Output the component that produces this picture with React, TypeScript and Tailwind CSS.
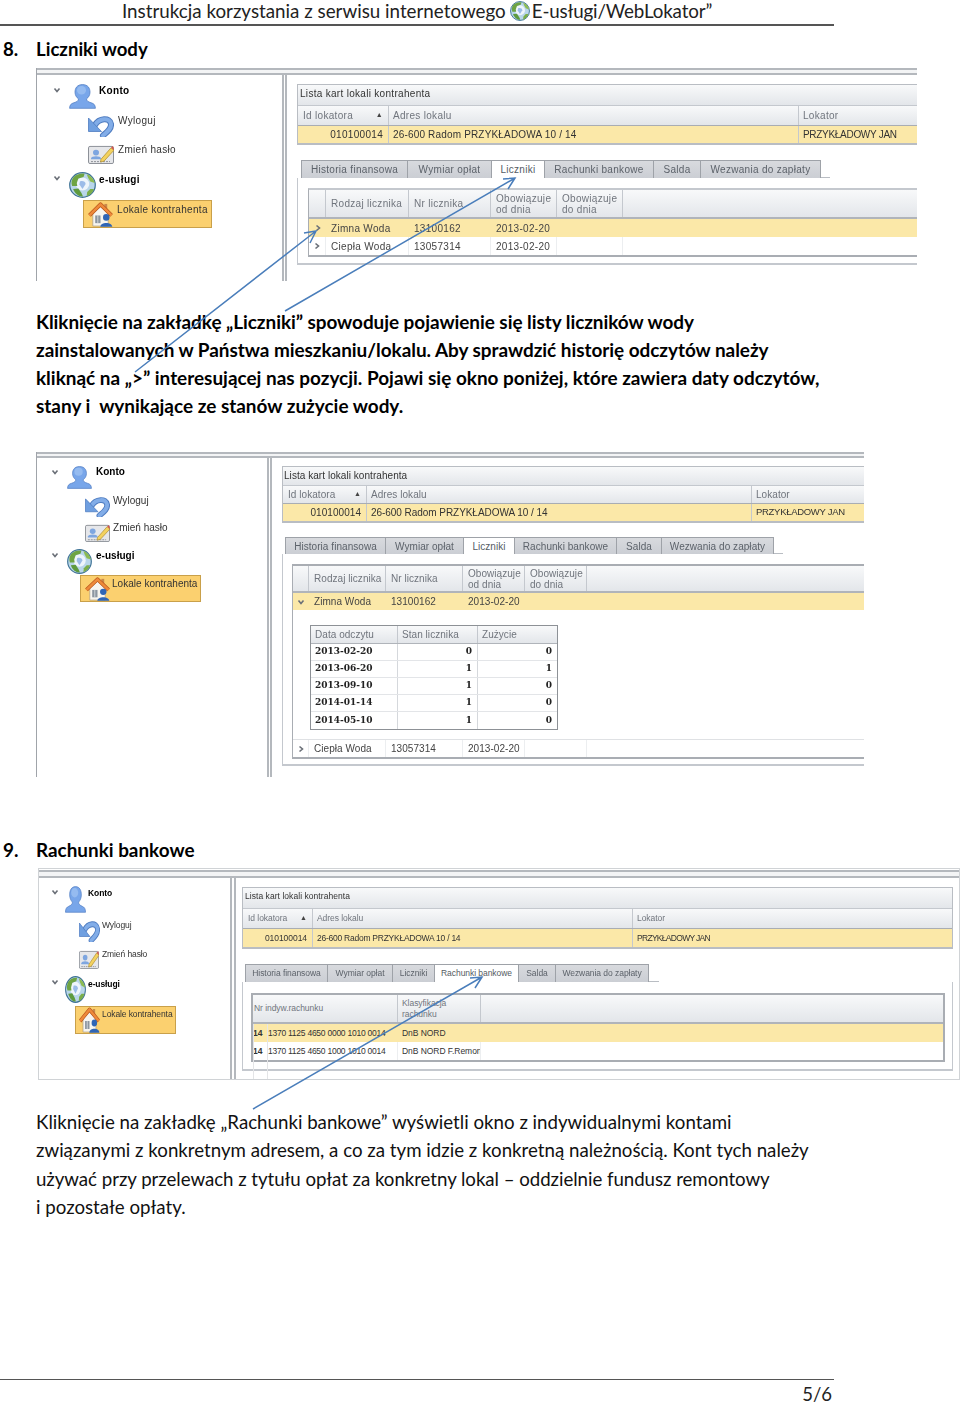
import React from 'react';

const Chevron = ({ open }: { open?: boolean }) => (
  <svg viewBox="0 0 8 8" className="w-2 h-2 shrink-0" fill="none" stroke="#6b7078" strokeWidth="1.6">
    <path d={open ? 'M1.5 2.5 L4 5.5 L6.5 2.5' : 'M2.5 1.5 L5.5 4 L2.5 6.5'} />
  </svg>
);

const PersonIcon = ({ className }: { className: string }) => (
  <svg viewBox="0 0 27 26" preserveAspectRatio="none" className={`shrink-0 ${className}`}>
    <path d="M13.5 0.600 C8 0.600 6 4.500 6 8.500 C6 11.500 7.500 14 9.500 15.500 C9.500 17.500 8 18.500 5 19.500 C2 20.500 0.800 21.500 0.600 25.300 L26.400 25.300 C26.200 21.500 25 20.500 22 19.500 C19 18.500 17.500 17.500 17.500 15.500 C19.500 14 21 11.500 21 8.500 C21 4.500 19 0.600 13.5 0.600 Z" fill="#78a6ea" stroke="#5580c4" strokeWidth="0.8" />
    <ellipse cx="12.500" cy="6.500" rx="4.500" ry="4.500" fill="#a9c9f4" opacity="0.6" />
  </svg>
);

const UndoIcon = ({ className }: { className: string }) => (
  <svg viewBox="0 0 26 22" preserveAspectRatio="none" className={`shrink-0 ${className}`}>
    <path d="M7 10 C11 3 22 2 23 9 C23.500 14 19 17 15 20.500" fill="none" stroke="#4f7cc0" strokeWidth="6" strokeLinecap="round" />
    <path d="M7 10 C11 3 22 2 23 9 C23.500 14 19 17 15 20.500" fill="none" stroke="#82ade8" strokeWidth="4" strokeLinecap="round" />
    <path d="M0.500 3 L0.500 16.500 L13.500 16.500 Z" fill="#6f9fe0" stroke="#4f7cc0" strokeWidth="0.8" />
  </svg>
);

const CardIcon = ({ className }: { className: string }) => (
  <svg viewBox="0 0 26 20" preserveAspectRatio="none" className={`shrink-0 ${className}`}>
    <rect x="0.500" y="1.500" width="25" height="18" rx="1.500" fill="#e6e7ea" stroke="#8b8f96" />
    <circle cx="8" cy="8" r="3" fill="#7ea6e0" />
    <path d="M3 14 C3 11 13 11 13 14 L13 15 L3 15 Z" fill="#7ea6e0" />
    <path d="M3 17.500 H22" stroke="#8b8f96" strokeWidth="1" strokeDasharray="2 1" />
    <path d="M13 15 L23 3 L26 5.500 L16 17 L12.500 18 Z" fill="#f3d25f" stroke="#a9872b" strokeWidth="0.7" />
    <path d="M23 3 L26 5.500 L25 1 Z" fill="#d9534a" />
  </svg>
);

const GlobeIcon = ({ className }: { className: string }) => (
  <svg viewBox="0 0 26 26" preserveAspectRatio="none" className={`shrink-0 ${className}`}>
    <circle cx="13" cy="13" r="12.300" fill="#b9d6ea" stroke="#3f7396" strokeWidth="1.200" />
    <circle cx="13" cy="12" r="6.500" fill="#eef5fb" />
    <path d="M4.500 5 C7 2.500 11 1.200 15 1.700 L14 5 L9 6.500 L7.500 11 L8 14 L3 14 C1.800 10.500 2.500 7.500 4.500 5 Z" fill="#6ea443" />
    <path d="M17 2.200 C21 3.500 24 7 24.800 11 L20.500 9.500 L18.500 6 Z" fill="#8dbb52" />
    <path d="M4 17 L9 16.500 L12 21 L13.500 24.500 C9 24.800 5.500 21.500 4 17 Z" fill="#5e9a3e" />
    <path d="M24 17 C23 20.500 20.500 23 17 24.300 L17.500 20 L20.500 17 Z" fill="#7aae49" />
    <path d="M10.500 9.500 C13 8.500 16 9.500 16 12 L13 17 L10 12.500 Z" fill="#9cbce8" />
  </svg>
);

const HouseIcon = ({ className }: { className: string }) => (
  <svg viewBox="0 0 26 26" preserveAspectRatio="none" className={`shrink-0 ${className}`}>
    <rect x="17" y="2" width="3" height="6" fill="#c98a4a" />
    <path d="M5 12 L13 5 L21 12 L21 25 L5 25 Z" fill="#f7f5ef" stroke="#a99a85" strokeWidth="0.7" />
    <path d="M1.500 14 L13 2.500 L24.500 14" fill="none" stroke="#b9561d" strokeWidth="4" strokeLinejoin="round" />
    <path d="M1.500 14 L13 2.500 L24.500 14" fill="none" stroke="#ee8a3a" strokeWidth="2.600" strokeLinejoin="round" />
    <rect x="7.500" y="14" width="5.500" height="8" fill="#8c96a0" />
    <path d="M10.200 14 V22" stroke="#e6e8ea" strokeWidth="0.800" />
    <circle cx="19" cy="16" r="3.400" fill="#2f65b5" />
    <path d="M12.800 25.800 C12.800 20.500 25.200 20.500 25.200 25.800 Z" fill="#2f65b5" />
  </svg>
);

type TreeStyle = {
  root: string;
  konto: string; kontoIcon: string; kontoLabel: string;
  wyloguj: string; wylogujIcon: string; wylogujLabel: string;
  haslo: string; hasloIcon: string; hasloLabel: string;
  uslugi: string; uslugiIcon: string; uslugiLabel: string;
  lokale: string; lokaleIcon: string; lokaleLabel: string;
  chev: string;
};

const Tree = ({ s }: { s: TreeStyle }) => (
  <div className={`flex flex-col shrink-0 text-[#333] ${s.root}`}>
    <div className={`flex items-start ${s.konto}`}>
      <span className={`flex pt-[2px] ${s.chev}`}><Chevron open /></span>
      <PersonIcon className={s.kontoIcon} />
      <span className={`font-bold text-black ${s.kontoLabel}`}>Konto</span>
    </div>
    <div className={`flex items-start ${s.wyloguj}`}>
      <UndoIcon className={s.wylogujIcon} />
      <span className={s.wylogujLabel}>Wyloguj</span>
    </div>
    <div className={`flex items-start ${s.haslo}`}>
      <CardIcon className={s.hasloIcon} />
      <span className={s.hasloLabel}>Zmień hasło</span>
    </div>
    <div className={`flex items-start ${s.uslugi}`}>
      <span className={`flex pt-[2px] ${s.chev}`}><Chevron open /></span>
      <GlobeIcon className={s.uslugiIcon} />
      <span className={`font-bold text-black ${s.uslugiLabel}`}>e-usługi</span>
    </div>
    <div className={`flex items-start bg-[#fbd06f] border border-[#c9a04a] ${s.lokale}`}>
      <HouseIcon className={s.lokaleIcon} />
      <span className={s.lokaleLabel}>Lokale kontrahenta</span>
    </div>
  </div>
);

const headBg = 'bg-gradient-to-b from-[#f8f9fa] to-[#e3e6ea]';
const cellLine = 'border-r border-[#c4c8ce]';

type ListStyle = { wrap: string; title: string; head: string; row: string; cols: string; addr: string; name: string };

const ListPanel = ({ s }: { s: ListStyle }) => (
  <div className={`border border-[#b9bdc3] border-b-2 shrink-0 ${s.wrap}`}>
    <div className={`flex items-center text-[#333] ${headBg} border-b border-[#c4c8ce] ${s.title}`}>Lista kart lokali kontrahenta</div>
    <div className={`grid text-[#70757d] ${headBg} border-b border-[#a9adb3] ${s.cols} ${s.head}`}>
      <div className={`flex items-center justify-between px-[5px] ${cellLine}`}>Id lokatora <span className="text-[7px] text-[#444]">▲</span></div>
      <div className={`flex items-center px-[4px] ${cellLine}`}>Adres lokalu</div>
      <div className="flex items-center px-[4px]">Lokator</div>
    </div>
    <div className={`grid text-[#333] bg-[#fbe8a8] ${s.cols} ${s.row}`}>
      <div className={`flex items-center justify-end px-[5px] ${cellLine}`}>010100014</div>
      <div className={`flex items-center px-[4px] whitespace-nowrap ${cellLine} ${s.addr}`}>26-600 Radom PRZYKŁADOWA 10 / 14</div>
      <div className={`flex items-center px-[4px] whitespace-nowrap ${s.name}`}>PRZYKŁADOWY JAN</div>
    </div>
  </div>
);

const TABS = ['Historia finansowa', 'Wymiar opłat', 'Liczniki', 'Rachunki bankowe', 'Salda', 'Wezwania do zapłaty'];

const Tabs = ({ widths, active, cls, strip }: { widths: string[]; active: number; cls: string; strip: string }) => (
  <div className={`flex shrink-0 ${strip}`}>
    {TABS.map((t, i) => (
      <div
        key={t}
        className={`flex items-center justify-center whitespace-nowrap border-r border-t border-[#9ea2a8] first:border-l ${widths[i]} ${cls} ${i === active ? 'bg-white text-[#555b63] border-b-0 relative z-10 -mb-px' : 'bg-gradient-to-b from-[#d8dade] to-[#cbced4] text-[#5c626a]'}`}
      >
        {t}
      </div>
    ))}
  </div>
);

const MeterHead = ({ cols, cls }: { cols: string; cls: string }) => (
  <div className={`grid text-[#70757d] ${headBg} border-b-2 border-[#b0b4ba] ${cols} ${cls}`}>
    <div className={cellLine} />
    <div className={`flex items-center pl-[5px] ${cellLine}`}>Rodzaj licznika</div>
    <div className={`flex items-center pl-[5px] ${cellLine}`}>Nr licznika</div>
    <div className={`flex items-center pl-[5px] leading-[11px] ${cellLine}`}>Obowiązuje<br />od dnia</div>
    <div className={`flex items-center pl-[5px] leading-[11px] ${cellLine}`}>Obowiązuje<br />do dnia</div>
    <div />
  </div>
);

const MeterRow = ({ cols, cls, name, no, open, hl }: { cols: string; cls: string; name: string; no: string; open?: boolean; hl?: boolean }) => (
  <div className={`grid text-[#444] ${hl ? 'bg-[#fbe8a8]' : 'bg-white'} ${cols} ${cls}`}>
    <div className={`flex items-center justify-center ${hl ? '' : 'border-r border-[#eceef0]'}`}><Chevron open={open} /></div>
    <div className={`flex items-center pl-[5px] ${hl ? '' : 'border-r border-[#eceef0]'}`}>{name}</div>
    <div className={`flex items-center pl-[5px] ${hl ? '' : 'border-r border-[#eceef0]'}`}>{no}</div>
    <div className={`flex items-center pl-[5px] ${hl ? '' : 'border-r border-[#eceef0]'}`}>2013-02-20</div>
    <div className={hl ? '' : 'border-r border-[#eceef0]'} />
    <div />
  </div>
);

const READINGS = [
  ['2013-02-20', '0', '0'],
  ['2013-06-20', '1', '1'],
  ['2013-09-10', '1', '0'],
  ['2014-01-14', '1', '0'],
  ['2014-05-10', '1', '0'],
];

const tree1: TreeStyle = {
  root: 'w-[245px] pt-[9px] text-[10px] leading-[12px] tracking-[0.32px]',
  chev: 'w-[16px]',
  konto: 'h-[31px] pl-[16px]', kontoIcon: 'w-[27px] h-[25px]', kontoLabel: 'ml-[3px] mt-[1px]',
  wyloguj: 'h-[30px] pl-[51px]', wylogujIcon: 'w-[26px] h-[22px]', wylogujLabel: 'ml-[4px]',
  haslo: 'h-[27px] pl-[51px]', hasloIcon: 'w-[26px] h-[19px]', hasloLabel: 'ml-[4px] -mt-[1px]',
  uslugi: 'h-[28px] pl-[16px]', uslugiIcon: 'w-[27px] h-[26px]', uslugiLabel: 'ml-[3px] mt-[2px]',
  lokale: 'h-[28px] w-[129px] ml-[46px]', lokaleIcon: 'w-[25px] h-[25px] ml-[4px] mt-[1px]', lokaleLabel: 'ml-[4px] mt-[3px] whitespace-nowrap',
};

const tree2: TreeStyle = {
  root: 'w-[230px] pt-[8px] text-[10px] leading-[12px] tracking-[0.02px]',
  chev: 'w-[16px]',
  konto: 'h-[30px] pl-[14px]', kontoIcon: 'w-[25px] h-[23px]', kontoLabel: 'ml-[4px]',
  wyloguj: 'h-[28px] pl-[48px]', wylogujIcon: 'w-[25px] h-[21px]', wylogujLabel: 'ml-[3px] -mt-[1px]',
  haslo: 'h-[25px] pl-[48px]', hasloIcon: 'w-[25px] h-[18px]', hasloLabel: 'ml-[3px] -mt-[2px]',
  uslugi: 'h-[26px] pl-[14px]', uslugiIcon: 'w-[25px] h-[25px]', uslugiLabel: 'ml-[4px] mt-[1px]',
  lokale: 'h-[27px] w-[121px] ml-[43px]', lokaleIcon: 'w-[25px] h-[24px] ml-[4px] mt-[1px]', lokaleLabel: 'ml-[2px] mt-[2px] whitespace-nowrap',
};

const tree3: TreeStyle = {
  root: 'w-[191px] pt-[8px] text-[8.500px] leading-[12px] tracking-[-0.1px]',
  chev: 'w-[14px]',
  konto: 'h-[34px] pl-[12px]', kontoIcon: 'w-[21px] h-[27px]', kontoLabel: 'ml-[2px] mt-[1px]',
  wyloguj: 'h-[30px] pl-[40px]', wylogujIcon: 'w-[21px] h-[22px]', wylogujLabel: 'ml-[2px] -mt-[1px]',
  haslo: 'h-[26px] pl-[40px]', hasloIcon: 'w-[20px] h-[19px]', hasloLabel: 'ml-[3px] -mt-[2px]',
  uslugi: 'h-[30px] pl-[12px]', uslugiIcon: 'w-[21px] h-[27px]', uslugiLabel: 'ml-[2px] mt-[2px]',
  lokale: 'h-[28px] w-[101px] ml-[36px]', lokaleIcon: 'w-[21px] h-[26px] ml-[3px]', lokaleLabel: 'ml-[2px] mt-[1px] whitespace-nowrap',
};

const Arrows = () => (
  <svg className="absolute inset-0 w-[960px] h-[1406px] pointer-events-none" viewBox="0 0 960 1406" fill="none" stroke="#4a7ebb" strokeWidth="1.500">
    <path d="M135 372 L316 231 M304 233 L316 231 L310 243" />
    <path d="M285 311 L515 178 M503 179 L515 178 L508 189" />
    <path d="M253 1109 L482 977 M470 978 L482 977 L475 988" />
  </svg>
);

const sans = "font-['Lato','Liberation_Sans',sans-serif]";
const ui = "font-['Liberation_Sans',Arial,sans-serif]";
const cols1 = 'grid-cols-[17px_83px_82px_66px_66px_1fr]';
const cols2 = 'grid-cols-[16px_77px_77px_62px_62px_1fr]';

export default function App() {
  return (
    <div className={`relative w-[960px] h-[1406px] flex flex-col overflow-hidden bg-white text-black ${sans}`}>
      {/* running header */}
      <div className="h-[26px] w-[834px] shrink-0 border-b-2 border-[#555] flex items-center pl-[122px] pb-[2px] text-[18.800px] leading-[24px] text-[#222] whitespace-nowrap">
        Instrukcja korzystania z serwisu internetowego
        <GlobeIcon className="w-[20px] h-[20px] ml-[4px] mr-[2px]" />
        <span className="tracking-[-0.15px]">E-usługi/WebLokator”</span>
      </div>

      {/* 8 */}
      <div className="flex h-[28px] mt-[10px] shrink-0 items-center font-bold text-[18.600px]">
        <span className="w-[36px] pl-[3px]">8.</span>
        <span>Liczniki wody</span>
      </div>

      <div className={`ml-[36px] mt-[4px] w-[881px] h-[213px] shrink-0 flex flex-col border-l border-[#a0a4aa] overflow-hidden blur-[0.35px] ${ui}`}>
        <div className="h-[7px] shrink-0 border-y-2 border-[#b4b8bd] bg-[#f3f4f5]" />
        <div className="flex flex-1 min-h-0">
          <Tree s={tree1} />
          <div className="w-[5px] shrink-0 border-x-2 border-[#b4b8bd]" />
          <div className="flex-1 pl-[10px] pt-[9px] flex flex-col text-[10px] tracking-[0.3px]">
            <ListPanel s={{ wrap: 'w-[620px] border-r-0', title: 'h-[21px] pl-[2px] pb-[3px]', head: 'h-[20px]', row: 'h-[17px]', cols: 'grid-cols-[91px_410px_1fr]', addr: 'tracking-[0.17px]', name: 'tracking-[-0.3px]' }} />
            <Tabs strip="mt-[15px] ml-[4px] h-[18px] w-[529px] border-b border-[#b9bdc3]" cls="h-[18px]" active={2} widths={['w-[107px]', 'w-[84px]', 'w-[53px]', 'w-[109px]', 'w-[47px]', 'w-[120px]']} />
            <div className="w-[620px] h-[87px] border-l border-b-2 border-[#c4c8ce] pl-[10px] pt-[10px] shrink-0">
              <div className="w-[610px] border-y-2 border-l border-[#a9adb3] border-t-[#c4c8ce]">
                <MeterHead cols={cols1} cls="h-[29px]" />
                <MeterRow cols={cols1} cls="h-[18px]" name="Zimna Woda" no="13100162" hl />
                <MeterRow cols={cols1} cls="h-[18px]" name="Ciepła Woda" no="13057314" />
              </div>
            </div>
          </div>
        </div>
      </div>

      <div className="pl-[36px] mt-[27px] text-[18.950px] leading-[28px] font-bold whitespace-nowrap shrink-0">
        <div className="tracking-[-0.05px]">Kliknięcie na zakładkę „Liczniki” spowoduje pojawienie się listy liczników wody</div>
        <div className="tracking-[-0.035px]">zainstalowanych w Państwa mieszkaniu/lokalu. Aby sprawdzić historię odczytów należy</div>
        <div>kliknąć na „&gt;” interesującej nas pozycji. Pojawi się okno poniżej, które zawiera daty odczytów,</div>
        <div>stany i&nbsp; wynikające ze stanów zużycie wody.</div>
      </div>

      <div className={`ml-[36px] mt-[32px] w-[828px] h-[325px] shrink-0 flex flex-col border-l border-[#a0a4aa] overflow-hidden blur-[0.35px] ${ui}`}>
        <div className="h-[6px] shrink-0 border-y-2 border-[#b4b8bd] bg-[#f3f4f5]" />
        <div className="flex flex-1 min-h-0">
          <Tree s={tree2} />
          <div className="w-[5px] shrink-0 border-x-2 border-[#b4b8bd]" />
          <div className="flex-1 pl-[10px] pt-[8px] flex flex-col text-[10px] tracking-[0.05px]">
            <ListPanel s={{ wrap: 'w-[582px] border-r-0', title: 'h-[19px] pl-[1px] pb-[2px]', head: 'h-[18px]', row: 'h-[17px]', cols: 'grid-cols-[84px_385px_1fr]', addr: 'tracking-[-0.05px]', name: 'text-[9.500px] tracking-[-0.3px]' }} />
            <Tabs strip="mt-[14px] ml-[3px] h-[17px] w-[498px] border-b border-[#b9bdc3]" cls="h-[17px]" active={2} widths={['w-[101px]', 'w-[78px]', 'w-[51px]', 'w-[102px]', 'w-[45px]', 'w-[112px]']} />
            <div className="w-[582px] h-[212px] border-l border-b-2 border-[#c4c8ce] pl-[9px] pt-[10px] shrink-0">
              <div className="w-[573px] border-y-2 border-l border-[#a9adb3]">
                <MeterHead cols={cols2} cls="h-[27px]" />
                <MeterRow cols={cols2} cls="h-[17px]" name="Zimna Woda" no="13100162" open hl />
                <div className="h-[130px] pl-[17px] pt-[15px] border-b border-[#dfe1e4]">
                  <div className="w-[248px] border border-[#8d9196]">
                    <div className={`grid grid-cols-[87px_80px_1fr] h-[18px] text-[#70757d] ${headBg} border-b border-[#b0b4ba]`}>
                      <div className={`flex items-center pl-[4px] ${cellLine}`}>Data odczytu</div>
                      <div className={`flex items-center pl-[4px] ${cellLine}`}>Stan licznika</div>
                      <div className="flex items-center pl-[4px]">Zużycie</div>
                    </div>
                    {READINGS.map(([d, a, b]) => (
                      <div key={d} className="grid grid-cols-[87px_80px_1fr] h-[17px] border-b border-[#e3e5e8] last:border-b-0 font-['DejaVu_Serif',serif] font-bold text-[9px] tracking-normal text-[#222]">
                        <div className="flex items-center pl-[4px] border-r border-[#d5d8dc]">{d}</div>
                        <div className="flex items-center justify-end pr-[5px] border-r border-[#d5d8dc]">{a}</div>
                        <div className="flex items-center justify-end pr-[5px]">{b}</div>
                      </div>
                    ))}
                  </div>
                </div>
                <MeterRow cols={cols2} cls="h-[17px]" name="Ciepła Woda" no="13057314" />
              </div>
            </div>
          </div>
        </div>
      </div>

      {/* 9 */}
      <div className="flex h-[28px] mt-[59px] shrink-0 items-center font-bold text-[18.900px]">
        <span className="w-[36px] pl-[3px]">9.</span>
        <span>Rachunki bankowe</span>
      </div>

      <div className={`ml-[38px] mt-[4px] w-[922px] h-[212px] shrink-0 flex flex-col border-x border-y border-[#d0d3d6] overflow-hidden blur-[0.35px] ${ui}`}>
        <div className="h-[8px] mt-[1px] shrink-0 border-y-2 border-[#b4b8bd] bg-[#f3f4f5]" />
        <div className="flex flex-1 min-h-0">
          <Tree s={tree3} />
          <div className="w-[6px] shrink-0 border-x-2 border-[#b4b8bd]" />
          <div className="flex-1 pl-[6px] pt-[9px] flex flex-col text-[8.500px] tracking-[-0.05px]">
            <ListPanel s={{ wrap: 'w-[711px] border-r', title: 'h-[21px] pl-[2px] pb-[3px] tracking-[0.05px]', head: 'h-[20px]', row: 'h-[18px]', cols: 'grid-cols-[70px_320px_1fr]', addr: 'tracking-[-0.25px]', name: 'tracking-[-0.7px]' }} />
            <Tabs strip="mt-[15px] ml-[3px] h-[18px] w-[414px] border-b border-[#b9bdc3]" cls="h-[18px]" active={3} widths={['w-[83px]', 'w-[65px]', 'w-[42px]', 'w-[84px]', 'w-[37px]', 'w-[93px]']} />
            <div className="w-[711px] h-[89px] border-x border-b-2 border-[#c4c8ce] pl-[8px] pt-[11px] shrink-0">
              <div className="relative w-[694px] border-2 border-[#a9adb3]">
                <div className={`grid grid-cols-[145px_83px_1fr] h-[29px] text-[#70757d] ${headBg} border-b-2 border-[#b0b4ba]`}>
                  <div className={`flex items-center pl-[1px] ${cellLine}`}>Nr indyw.rachunku</div>
                  <div className={`flex items-center pl-[4px] leading-[11px] ${cellLine}`}>Klasyfikacja<br />rachunku</div>
                  <div />
                </div>
                <div className="grid grid-cols-[145px_83px_1fr] h-[18px] bg-[#fbe8a8] text-[#333]">
                  <div className="flex items-center whitespace-nowrap overflow-hidden tracking-[-0.25px]"><b className="w-[15px] shrink-0 tracking-normal">14</b>1370 1125 4650 0000 1010 0014</div>
                  <div className="flex items-center pl-[4px]">DnB NORD</div>
                  <div />
                </div>
                <div className="grid grid-cols-[145px_83px_1fr] h-[18px] bg-white text-[#333]">
                  <div className="flex items-center whitespace-nowrap overflow-hidden tracking-[-0.25px] border-r border-[#eceef0]"><b className="w-[15px] shrink-0 tracking-normal">14</b>1370 1125 4650 1000 1010 0014</div>
                  <div className="flex items-center pl-[4px] whitespace-nowrap overflow-hidden border-r border-[#eceef0]">DnB NORD F.Remontowy</div>
                  <div />
                </div>
                {/* stray column guides left under the first column */}
                <div className="absolute left-[0px] top-[29px] w-[15px] h-[56px] border-x border-[#e4e5e7]" />
              </div>
            </div>
          </div>
        </div>
      </div>

      <div className="pl-[36px] mt-[28px] text-[18.700px] leading-[28.300px] text-[#111] whitespace-nowrap shrink-0">
        <div>Kliknięcie na zakładkę „Rachunki bankowe” wyświetli okno z indywidualnymi kontami</div>
        <div>związanymi z konkretnym adresem, a co za tym idzie z konkretną należnością. Kont tych należy</div>
        <div className="tracking-[-0.05px]">używać przy przelewach z tytułu opłat za konkretny lokal – oddzielnie fundusz remontowy</div>
        <div>i pozostałe opłaty.</div>
      </div>

      {/* footer */}
      <div className="mt-auto h-[27px] w-[834px] shrink-0 border-t border-[#555] flex justify-end items-center pt-[3px] pr-[2px] text-[18.500px] text-[#222]">
        5/6
      </div>

      <Arrows />
    </div>
  );
}
